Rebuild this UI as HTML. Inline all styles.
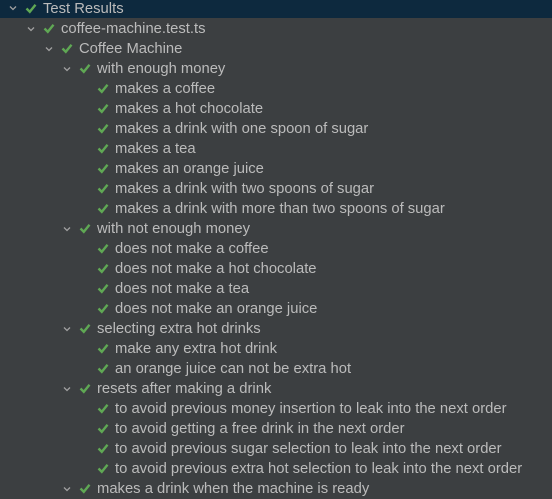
<!DOCTYPE html>
<html><head><style>
html,body{margin:0;padding:0;}
body{width:552px;height:485px;overflow:hidden;background:#3c3f41;font-family:"Liberation Sans",sans-serif;font-size:14.8px;color:#bbbbbb;position:relative;}
.r{position:absolute;left:0;right:0;height:20px;line-height:20px;white-space:nowrap;}
.sel{background:#0d293e;height:18px;line-height:18px;}
.chev{position:absolute;width:8px;height:8px;}
.chk{position:absolute;width:12px;height:11px;}
.t{position:absolute;top:0;}
</style></head><body>
<script>
const rows=[
[0,"Test Results",1],[1,"coffee-machine.test.ts",1],[2,"Coffee Machine",1],[3,"with enough money",1],
[4,"makes a coffee"],[4,"makes a hot chocolate"],[4,"makes a drink with one spoon of sugar"],[4,"makes a tea"],[4,"makes an orange juice"],[4,"makes a drink with two spoons of sugar"],[4,"makes a drink with more than two spoons of sugar"],
[3,"with not enough money",1],[4,"does not make a coffee"],[4,"does not make a hot chocolate"],[4,"does not make a tea"],[4,"does not make an orange juice"],
[3,"selecting extra hot drinks",1],[4,"make any extra hot drink"],[4,"an orange juice can not be extra hot"],
[3,"resets after making a drink",1],[4,"to avoid previous money insertion to leak into the next order"],[4,"to avoid getting a free drink in the next order"],[4,"to avoid previous sugar selection to leak into the next order"],[4,"to avoid previous extra hot selection to leak into the next order"],
[3,"makes a drink when the machine is ready",1]];
let h="";
rows.forEach((r,i)=>{
 const top=i*20-1;
 const L=r[0];
 h+=`<div class="r${i==0?' sel':''}" style="top:${i==0?0:top}px">`;
 if(r[2]) h+=`<svg class="chev" style="left:${9+18*L}px;top:${i==0?4:6}px" viewBox="0 0 8 8"><path d="M1 2.5L4 5.5L7 2.5" stroke="#a0a0a0" stroke-width="1.3" fill="none"/></svg>`;
 h+=`<svg class="chk" style="left:${25+18*L}px;top:${i==0?3:4}px" viewBox="0 0 12 11"><path d="M1.5 5.5L4.8 8.8L10.5 1.8" stroke="#5fa854" stroke-width="2.4" fill="none"/></svg>`;
 h+=`<span class="t" style="left:${43+18*L}px">${r[1]}</span></div>`;
});
document.write(h);
</script>
</body></html>
